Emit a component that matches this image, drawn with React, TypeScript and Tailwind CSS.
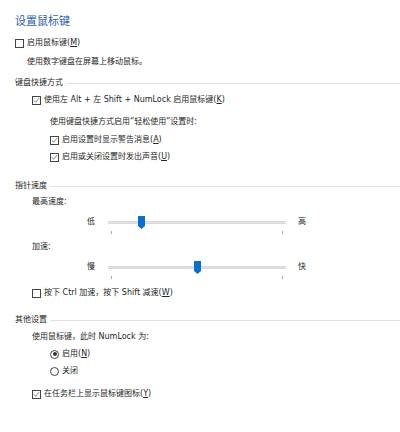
import React from 'react';

const font = { fontFamily: '"DejaVu Sans", "Noto Sans CJK SC", sans-serif' };

function Box({ checked }: { checked?: boolean }) {
  return (
    <span className="relative inline-block w-[9px] h-[9px] border border-[#444] bg-white shrink-0">
      {checked && (
        <svg viewBox="0 0 9 9" className="absolute inset-0 w-full h-full">
          <path d="M1.2 4.4 L3.4 6.8 L7.8 1.4" fill="none" stroke="#333" strokeWidth="0.8" />
        </svg>
      )}
    </span>
  );
}

function Radio({ checked }: { checked?: boolean }) {
  return (
    <span className="flex items-center justify-center w-[9px] h-[9px] rounded-full border border-[#444] bg-white shrink-0">
      {checked && <span className="w-[4px] h-[4px] rounded-full bg-[#333]" />}
    </span>
  );
}

function Key({ k }: { k: string }) {
  return (
    <>
      (<span className="underline underline-offset-1">{k}</span>)
    </>
  );
}

function Check({ checked, children, className = '' }: any) {
  return (
    <div className={`flex items-center h-[16px] gap-[3px] ${className}`}>
      <Box checked={checked} />
      <span>{children}</span>
    </div>
  );
}

function Group({ title, className = '' }: { title: string; className?: string }) {
  return (
    <div className={`flex items-center h-[16px] gap-[3px] ${className}`}>
      <span>{title}</span>
      <div className="flex-1 h-px bg-[#e2e2e2]" />
    </div>
  );
}

function Slider({ lo, hi, pos }: { lo: string; hi: string; pos: number }) {
  return (
    <>
      <div className="flex items-center h-[16px] ml-[72px]">
        <span className="w-[21px]">{lo}</span>
        <div className="relative w-[178px] h-[3px] bg-[#e4e4e4] border-y border-[#d9d9d9]">
          <svg
            viewBox="0 0 7 13"
            className="absolute w-[7px] h-[13px] top-[-6px]"
            style={{ left: pos }}
          >
            <path d="M0 0 H7 V10 L3.5 13 L0 10 Z" fill="#0a6fd1" />
          </svg>
        </div>
        <span className="ml-[12px]">{hi}</span>
      </div>
      <div className="relative h-[3px] mt-[1px] ml-[93px] w-[178px]">
        <div className="absolute left-[3px] top-0 w-px h-[3px] bg-[#aaa]" />
        <div className="absolute left-[174px] top-0 w-px h-[3px] bg-[#aaa]" />
      </div>
    </>
  );
}

export default function App() {
  return (
    <div
      className="w-[400px] h-[432px] bg-white text-[#262626] text-[8px] leading-none pl-[15px] pt-[10px] overflow-hidden"
      style={font}
    >
      <div className="h-[22px] flex items-center text-[11px] text-[#3060ac]">设置鼠标键</div>

      <Check className="mt-[3px]">
        启用鼠标键<Key k="M" />
      </Check>
      <div className="h-[16px] flex items-center mt-[3px] ml-[12px]">使用数字键盘在屏幕上移动鼠标。</div>

      <Group title="键盘快捷方式" className="mt-[5px]" />
      <Check checked className="mt-[1px] ml-[17px]">
        使用左 Alt + 左 Shift + NumLock 启用鼠标键<Key k="K" />
      </Check>
      <div className="h-[16px] flex items-center mt-[6px] ml-[35px]">使用键盘快捷方式启用“轻松使用”设置时:</div>
      <Check checked className="mt-[2px] ml-[35px]">
        启用设置时显示警告消息<Key k="A" />
      </Check>
      <Check checked className="mt-[1px] ml-[35px]">
        启用或关闭设置时发出声音<Key k="U" />
      </Check>

      <Group title="指针速度" className="mt-[13px]" />
      <div className="h-[16px] flex items-center ml-[17px]">最高速度:</div>
      <div className="mt-[4px]">
        <Slider lo="低" hi="高" pos={30} />
      </div>
      <div className="h-[16px] flex items-center mt-[5px] ml-[17px]">加速:</div>
      <div className="mt-[4px]">
        <Slider lo="慢" hi="快" pos={86} />
      </div>
      <Check className="mt-[6px] ml-[17px]">
        按下 Ctrl 加速，按下 Shift 减速<Key k="W" />
      </Check>

      <Group title="其他设置" className="mt-[11px]" />
      <div className="h-[16px] flex items-center mt-[1px] ml-[17px]">使用鼠标键，此时 NumLock 为:</div>
      <div className="flex items-center h-[16px] gap-[3px] mt-[1px] ml-[35px]">
        <Radio checked />
        <span>
          启用<Key k="N" />
        </span>
      </div>
      <div className="flex items-center h-[16px] gap-[3px] mt-[1px] ml-[35px]">
        <Radio />
        <span>关闭</span>
      </div>
      <Check checked className="mt-[7px] ml-[17px]">
        在任务栏上显示鼠标键图标<Key k="Y" />
      </Check>
    </div>
  );
}
